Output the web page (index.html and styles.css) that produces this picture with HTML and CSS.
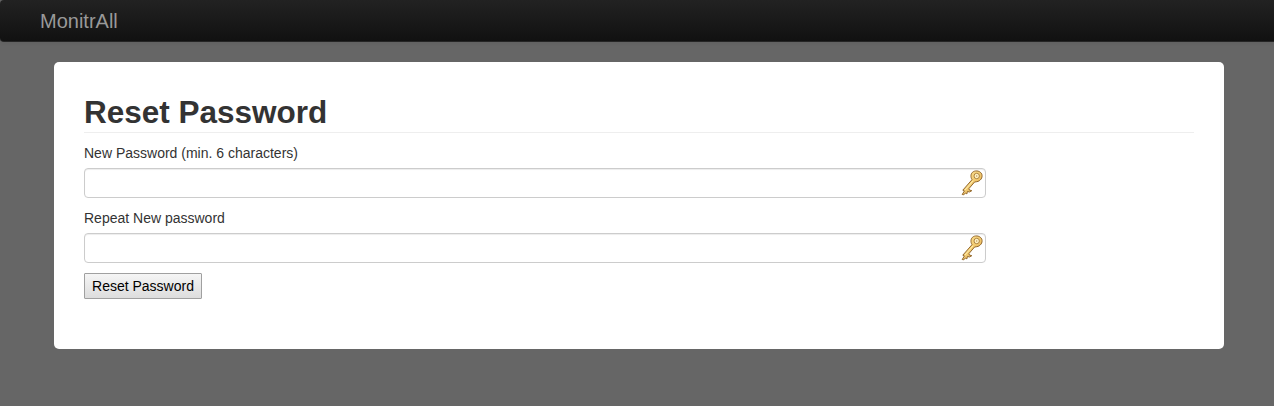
FILE: index.html
```html
<!DOCTYPE html>
<html lang="en">
<head>
<meta charset="utf-8">
<title>MonitrAll</title>
<link rel="stylesheet" href="styles.css">
</head>
<body>
<svg class="defs" width="0" height="0" aria-hidden="true">
  <defs>
    <linearGradient id="gold" x1="0" y1="0" x2="1" y2="1">
      <stop offset="0" stop-color="#ffeaa0"/>
      <stop offset="1" stop-color="#e6ab43"/>
    </linearGradient>
    <symbol id="key" viewBox="0 0 22 26">
      <path d="M12.3 1.7C15.2.1 19.5 1 20.8 4.2C22 7.8 19.2 11.2 15.8 11.7L13.6 12L8 18.5L8.3 20L10.8 20.7L8.4 22L6.4 21.4L5.9 23.9L4.4 23L2.8 24.8L1.2 24.5L3.5 20.8L1.8 20.2L11 9.7C9.4 7 9.5 3.3 12.3 1.7Z" fill="url(#gold)" stroke="#93682c" stroke-linejoin="round"/>
      <path d="M3.8 20.3L12 10.8" fill="none" stroke="#ffedac"/>
      <circle cx="15.7" cy="6" r="2.7" fill="#fff3c8" stroke="#a67b37" stroke-width=".9"/>
      <circle cx="15.7" cy="6" r=".7" fill="#bd934c"/>
    </symbol>
  </defs>
</svg>
<header class="navbar"><a class="brand">MonitrAll</a></header>
<main class="panel">
  <h1 class="title">Reset Password</h1>
  <form class="form">
    <label class="label" for="new">New Password (min. 6 characters)</label>
    <div class="field"><input class="input" id="new" type="password"><svg class="key"><use href="#key"/></svg></div>
    <label class="label" for="repeat">Repeat New password</label>
    <div class="field"><input class="input" id="repeat" type="password"><svg class="key"><use href="#key"/></svg></div>
    <button class="submit" type="button">Reset Password</button>
  </form>
</main>
</body>
</html>
```
FILE: styles.css
```css
* { box-sizing: border-box; }
body {
  margin: 0;
  min-height: 406px;
  background: #666;
  color: #333;
  font: 14px/20px "Liberation Sans", Arial, sans-serif;
}
.defs { display: block; }
.navbar {
  height: 42px;
  padding: 11px 40px 9px;
  border: 1px solid #252525;
  border-width: 0 0 1px;
  border-radius: 4px 0 0 4px;
  background: linear-gradient(#222, #111);
  box-shadow: 0 1px 4px rgba(0, 0, 0, .065);
}
.brand {
  display: block;
  color: #999;
  font-size: 20px;
  line-height: 21px;
}
.panel {
  width: 1170px;
  height: 287px;
  margin: 20px 0 0 54px;
  padding: 30px;
  border-radius: 5px;
  background: #fff;
}
.title {
  height: 41px;
  margin: 0 0 10px;
  border-bottom: 1px solid #eee;
  font-size: 31.5px;
  line-height: 40px;
}
.label {
  display: block;
  margin-bottom: 5px;
}
.field {
  display: flex;
  align-items: center;
  width: 902px;
  height: 30px;
  margin-bottom: 10px;
  padding: 0 2px 0 6px;
  border: 1px solid #ccc;
  border-radius: 4px;
  background: #fff;
  box-shadow: inset 0 1px 1px rgba(0, 0, 0, .075);
}
.input {
  flex: 1;
  height: 20px;
  padding: 0;
  border: 0;
  outline: 0;
  background: transparent;
}
.key {
  width: 22px;
  height: 26px;
}
.submit {
  display: block;
  width: 118px;
  height: 26px;
  padding: 0;
  border: 1px solid #a0a0a0;
  border-radius: 1px;
  background: linear-gradient(#f5f5f5, #ddd);
  color: #000;
  font: inherit;
}
```
